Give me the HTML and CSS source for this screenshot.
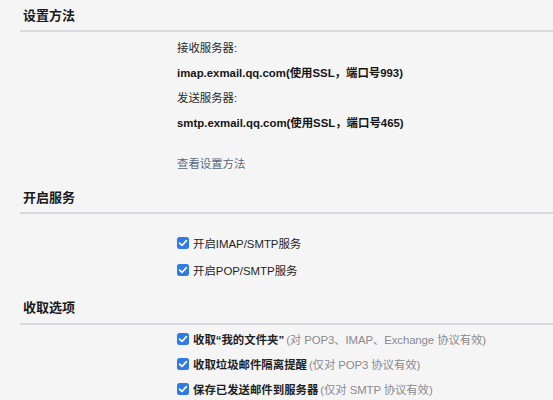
FILE: index.html
```html
<!DOCTYPE html>
<html lang="zh-CN">
<head>
<meta charset="utf-8">
<title>设置方法</title>
<link rel="stylesheet" href="styles.css">
</head>
<body>
<div class="page">
  <section class="sec sec-setup">
    <h2 class="sec-title">设置方法</h2>
    <div class="sec-body">
      <div class="line">接收服务器:</div>
      <div class="line strong">imap.exmail.qq.com(使用SSL，端口号993)</div>
      <div class="line">发送服务器:</div>
      <div class="line strong">smtp.exmail.qq.com(使用SSL，端口号465)</div>
      <a class="line link" href="#">查看设置方法</a>
    </div>
  </section>

  <section class="sec sec-service">
    <h2 class="sec-title">开启服务</h2>
    <div class="sec-body">
      <label class="check-row tall"><span class="cb"><svg viewBox="0 0 12 12"><path d="M2.6 6.2 L5 8.5 L9.4 3.6" /></svg></span><span class="lbl">开启IMAP/SMTP服务</span></label>
      <label class="check-row tall"><span class="cb"><svg viewBox="0 0 12 12"><path d="M2.6 6.2 L5 8.5 L9.4 3.6" /></svg></span><span class="lbl">开启POP/SMTP服务</span></label>
    </div>
  </section>

  <section class="sec sec-fetch">
    <h2 class="sec-title">收取选项</h2>
    <div class="sec-body">
      <label class="check-row"><span class="cb"><svg viewBox="0 0 12 12"><path d="M2.6 6.2 L5 8.5 L9.4 3.6" /></svg></span><span class="lbl strong">收取“我的文件夹”</span><span class="note">(对 POP3、IMAP、Exchange 协议有效)</span></label>
      <label class="check-row"><span class="cb"><svg viewBox="0 0 12 12"><path d="M2.6 6.2 L5 8.5 L9.4 3.6" /></svg></span><span class="lbl strong">收取垃圾邮件隔离提醒</span><span class="note">(仅对 POP3 协议有效)</span></label>
      <label class="check-row"><span class="cb"><svg viewBox="0 0 12 12"><path d="M2.6 6.2 L5 8.5 L9.4 3.6" /></svg></span><span class="lbl strong">保存已发送邮件到服务器</span><span class="note">(仅对 SMTP 协议有效)</span></label>
    </div>
  </section>
</div>
</body>
</html>
```

FILE: styles.css
```css
html, body {
  margin: 0;
  padding: 0;
  background: #f5f5f6;
}
body {
  font-family: "Liberation Sans", "Noto Sans CJK SC", sans-serif;
  color: #1f1f1f;
  font-size: 11.4px;
}
.page {
  padding-left: 20px;
}
.sec-title {
  margin: 0;
  padding: 2px 0 0 3px;
  line-height: 28px;
  font-size: 13px;
  font-weight: bold;
  color: #1a1a1a;
  border-bottom: 2px solid #d9dae0;
}
.sec-body {
  padding-left: 157px;
  display: flex;
  flex-direction: column;
}
.sec-setup .sec-body {
  padding-top: 4px;
  padding-bottom: 5px;
}
.line {
  display: block;
  line-height: 25px;
  color: #2a2a2a;
}
.strong {
  font-weight: bold;
  color: #151515;
}
.link {
  margin-top: 16px;
  color: #5a6782;
  text-decoration: none;
}
.sec-service .sec-body {
  padding-top: 15px;
  padding-bottom: 8px;
}
.sec-fetch .sec-title {
  line-height: 30px;
}
.sec-fetch .sec-body {
  padding-top: 1px;
}
.check-row {
  display: flex;
  align-items: center;
  height: 25.3px;
}
.check-row.tall {
  height: 27px;
}
.cb {
  width: 12px;
  height: 12px;
  border-radius: 2.5px;
  background: #2f7ae5;
  display: flex;
  align-items: center;
  justify-content: center;
  margin-right: 4px;
  flex: none;
}
.cb svg {
  width: 12px;
  height: 12px;
}
.cb path {
  fill: none;
  stroke: #ffffff;
  stroke-width: 1.7;
  stroke-linecap: round;
  stroke-linejoin: round;
}
.lbl {
  color: #1f1f1f;
}
.note {
  color: #8a8a8e;
  margin-left: 2px;
  letter-spacing: -0.1px;
}
```
